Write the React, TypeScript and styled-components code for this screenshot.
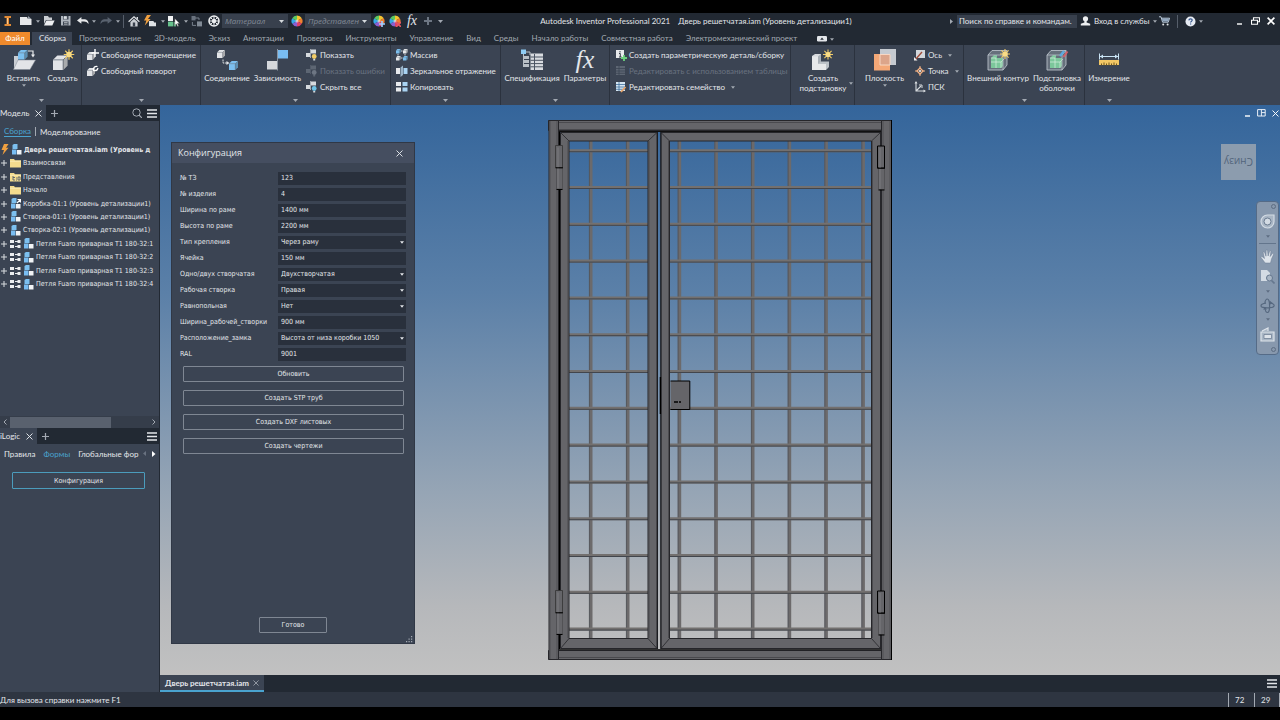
import React from "react";
import styled, { createGlobalStyle, css } from "styled-components";

const ui = `Lato, "Open Sans", sans-serif`;
const form = `"DejaVu Sans Condensed", "DejaVu Sans", sans-serif`;
const c = {
  dark: "#222933",
  panel: "#3b4453",
  line: "#2b323e",
  text: "#e3e6ea",
  dim: "#a3a9b2",
  off: "#697280",
  accent: "#4aa3cf",
  field: "#29303c",
  light: "#d6dade",
  blue: "#7cc0f0",
  gold: "#f2cc66",
};

const Global = createGlobalStyle`
  * { box-sizing: border-box; }
  body { margin: 0; background: #000; }
  button, input, select { font: inherit; color: inherit; margin: 0; padding: 0; border: 0; background: none; border-radius: 0; }
  button { cursor: pointer; white-space: nowrap; }
  svg { display: block; flex: none; }
`;

/* ---------- icons ---------- */
type SvgProps = { w: number; h: number; children: React.ReactNode };
const Svg = ({ w, h, children }: SvgProps) => (
  <svg width={w} height={h} viewBox={`0 0 ${w} ${h}`} fill="none" aria-hidden="true">{children}</svg>
);
const Caret = ({ color = c.dim, w = 5 }: { color?: string; w?: number }) => (
  <svg width={w} height="3" viewBox="0 0 5 3" aria-hidden="true"><path d="M0 0h5L2.5 3z" fill={color} /></svg>
);
const Cube = ({ x, y, s, f = c.light }: { x: number; y: number; s: number; f?: string }) => (
  <g transform={`translate(${x} ${y}) scale(${s})`}>
    <path d="M0 3L3 0H10V7L7 10H0z" fill={f} />
    <path d="M0 3H7V10M7 3L10 0" stroke="#6d7681" strokeWidth=".6" />
    <path d="M7 3L10 0V7L7 10z" fill="#000" opacity=".25" />
  </g>
);
const Star = ({ x, y, s = 1 }: { x: number; y: number; s?: number }) => (
  <g transform={`translate(${x} ${y}) scale(${s})`}>
    <path d="M0-5V5M-5 0H5M-3.6-3.6L3.6 3.6M-3.6 3.6L3.6-3.6" stroke={c.gold} strokeWidth="1.1" />
    <circle r="2.6" fill="#f9dc85" />
  </g>
);
const Wheel = ({ mark }: { mark?: "plus" | "x" }) => (
  <Svg w={12} h={12}>
    <path d="M6 6V.5A5.500 5.500 0 0 1 10.800 3.200z" fill="#f4c430" />
    <path d="M6 6L10.800 3.200A5.500 5.500 0 0 1 10.800 8.800z" fill="#f08030" />
    <path d="M6 6L10.800 8.800A5.500 5.500 0 0 1 6 11.500z" fill="#dd3f6a" />
    <path d="M6 6V11.500A5.500 5.500 0 0 1 1.200 8.800z" fill="#8a5fd0" />
    <path d="M6 6L1.200 8.800A5.500 5.500 0 0 1 1.200 3.200z" fill="#35a8e8" />
    <path d="M6 6L1.200 3.200A5.500 5.500 0 0 1 6 .5z" fill="#5cc860" />
    <circle cx="6" cy="6" r="1.6" fill="#fff" opacity=".6" />
    {mark === "plus" && <path d="M9 6v6M6 9h6" stroke="#9fd0ff" strokeWidth="1.6" />}
    {mark === "x" && <path d="M7 7l5 5M12 7l-5 5" stroke="#e85560" strokeWidth="1.6" />}
  </Svg>
);
const IconI = () => (
  <Svg w={8} h={12}><path d="M.5 1h6.500v2H5v6h2v2H.5V9H2.500V3H.5z" fill="#e08a35" /><path d="M3 3h1v6H3z" fill="#ffc98a" /></Svg>
);
const IconNew = () => <Svg w={12} h={10}><path d="M0 1h7l1 2h3.500v6H0z" fill="#e6e8ea" /><path d="M8 0l3.500 3H8z" fill="#9aa3ad" /></Svg>;
const IconOpen = () => <Svg w={12} h={10}><path d="M1 0h4l1 1.500h3V4H3L1 8z" fill="#c9cdd2" /><path d="M3.400 4.600H11.600L9.300 9.400H1z" fill="#eceef0" /></Svg>;
const IconSave = () => <Svg w={10} h={10}><path d="M0 0h9.500v9.500H0z" fill="#aeb5bd" /><path d="M2 0h5.500v3.600H2zM2 5.600h5.500v3.900H2z" fill="#3a4350" /><path d="M3 .6h2.600v2.200H3zM3 6.600h3.600M3 8.200h3.600" stroke="#d8dce0" strokeWidth=".7" fill="#d8dce0" /></Svg>;
const IconUndo = ({ off }: { off?: boolean }) => (
  <svg width="12" height="8" viewBox="0 0 12 8" aria-hidden="true">
    <path d={off ? "M12 3.400L7.600 0V2.200H4Q.6 2.600.4 7 2.400 4.600 5 4.600H7.600V6.800z" : "M0 3.400L4.400 0V2.200H8Q11.400 2.600 11.600 7 9.600 4.600 7 4.600H4.400V6.800z"} fill={off ? "#59626f" : "#e6e8ea"} />
  </svg>
);
const IconHome = () => <Svg w={12} h={11}><path d="M.6 5.800L6 .8l5.400 5" stroke="#dfe2e5" strokeWidth="1.2" /><path d="M2.400 6L6 2.800 9.600 6v4.600H2.400z" fill="#c9cdd2" /><path d="M4.800 6.500h2.400v4H4.800z" fill="#39414d" /><path d="M8.600 1h1.400v2.400L8.600 2.200z" fill="#dfe2e5" /></Svg>;
const IconBoltDoc = () => <Svg w={13} h={12}><path d="M3 0L0 5.600h2.400L.8 10.600 6.600 4H4L7 0z" fill="#f0a040" /><path d="M5 6h4.400l.8 1.400H12v3.800H5z" fill="#dfe2e5" /></Svg>;
const IconPick = () => <Svg w={12} h={11}><path d="M0 0h5v5H0z" fill="#f2f3f4" /><path d="M0 5.600h5v4.800H0z" fill="#67c18c" /><path d="M5.600 6H8v4.400H5.600z" fill="#67c18c" /><path d="M6.800 2.400v7l1.600-1.500 1.200 2.600 1.100-.5-1.200-2.600h2.200z" fill="#fff" stroke="#333" strokeWidth=".4" /></Svg>;
const IconPlace = () => <Svg w={12} h={11}><path d="M.5 0h4v4.400h-4z" fill="#69727e" /><path d="M6 5.400h5v5H6z" fill="#818a95" /><path d="M1.400 6v3.400H5M4 2h4v2" stroke="#818a95" strokeWidth=".9" /></Svg>;
const IconTarget = () => <Svg w={12} h={12}><circle cx="6" cy="6" r="5" stroke="#eceef0" strokeWidth="1.6" /><circle cx="6" cy="6" r="2.2" fill="#eceef0" /><path d="M6 1v3M6 8v3M1 6h3M8 6h3M2.600 2.600l1.800 1.800M7.600 7.600l1.800 1.800M9.400 2.600L7.600 4.400M4.400 7.600L2.600 9.400" stroke="#eceef0" /></Svg>;
const IconPlus = ({ color = "#6d7683", s = 8 }: { color?: string; s?: number }) => (
  <svg width={s} height={s} viewBox="0 0 8 8" aria-hidden="true"><path d="M4 0v8M0 4h8" stroke={color} strokeWidth={s > 7 ? 2 : 1.4} /></svg>
);
const IconX = ({ s = 7, color = c.text, t = 1.1 }: { s?: number; color?: string; t?: number }) => (
  <svg width={s} height={s} viewBox="0 0 8 8" aria-hidden="true"><path d="M.6.6l6.800 6.800M7.400.6L.6 7.400" stroke={color} strokeWidth={t} /></svg>
);
const IconMenu = () => <Svg w={10} h={9}><path d="M0 1h10M0 4.500h10M0 8h10" stroke="#e3e6ea" strokeWidth="1.4" /></Svg>;
const IconUser = () => <Svg w={11} h={10}><circle cx="5.5" cy="2.8" r="2.6" fill="#eceef0" /><path d="M4.400 4.500h2.200v2l3.600 1.200V9.600H.8V7.700l3.600-1.200z" fill="#eceef0" /></Svg>;
const IconCart = () => <Svg w={11} h={10}><path d="M0 .8h2l1.600 5.400h5.600l1.400-4H2.600" stroke="#b9c8d8" /><path d="M2.800 2.400h7.400l-1 3H3.600z" fill="#93a8bf" /><circle cx="4.2" cy="8.4" r="1" fill="#dfe2e5" /><circle cx="8.6" cy="8.4" r="1" fill="#dfe2e5" /></Svg>;
const IconHelp = () => <Svg w={11} h={11}><circle cx="5.5" cy="5.5" r="5" fill="#e6ebf3" /><path d="M3.800 4.300q.2-1.500 1.800-1.500 1.600 0 1.600 1.300 0 .8-.9 1.300-.7.4-.7 1M5.600 7.400v1.200" stroke="#33538a" strokeWidth="1.2" /></Svg>;
const IconRestore = () => <Svg w={9} h={8}><path d="M2.500 3V.7h6v4H6.600M.5 3.200h6v4h-6z" stroke="#fff" strokeWidth="1.1" /></Svg>;
const IconMin = () => <Svg w={7} h={8}><path d="M1 7h5" stroke="#fff" strokeWidth="1.4" /></Svg>;
const IconTile = () => <Svg w={9} h={8}><path d="M.6.6h7.600v6.400H.6zM4.400.6V7M4.400 3.600h3.800" stroke="#e8eef5" /></Svg>;
const IconCam = () => <Svg w={10} h={6}><rect width="10" height="5.5" rx="1.2" fill="#e3e6ea" /><path d="M3.200 3.800L5 1.600l1.800 2.200z" fill="#222933" /></Svg>;

const BigInsert = () => (
  <Svg w={24} h={22}>
    <path d="M2 7h4V17L2 20z" fill="#c9cdd2" /><path d="M6 11H23.500L18 20.500H1.500z" fill="#e2e4e7" /><path d="M6 11H23.500L18 20.500H1.500z" stroke="#828a94" strokeWidth=".5" />
    <Cube x={6} y={1} s={0.95} f={c.blue} />
    <path d="M16 2h5v4" stroke="#e8eaec" strokeWidth="1.2" /><path d="M19 5.500h4l-2 3z" fill="#e8eaec" />
  </Svg>
);
const BigCreate = () => <Svg w={24} h={22}><Cube x={2} y={6.5} s={1.45} f="#e2e4e7" /><Star x={18} y={5.5} s={1.05} /></Svg>;
const BigJoint = () => (
  <Svg w={24} h={22}><Cube x={2} y={1} s={0.8} f="#e2e4e7" /><Cube x={14} y={12} s={0.9} f={c.blue} /><path d="M8 10.500v3.500h4" stroke="#dfe2e5" strokeDasharray="2 .8" /><path d="M11.500 12l3 2-3 2z" fill="#dfe2e5" /></Svg>
);
const BigConstraint = () => (
  <Svg w={24} h={22}><path d="M12 1h10v8.500H12z" fill="#79bdf2" /><path d="M1 12h10v8.500H1z" fill="#d5d8dc" /><path d="M11.500 0v21.500" stroke="#8b95a1" /></Svg>
);
const BigBom = () => (
  <Svg w={24} h={22}><path d="M1 .5h5v4.500H1z" fill="#8fccf5" /><path d="M4 7h5v3H4zM4 11h5v3H4zM4 15h5v3H4z" fill="#b9bfc6" /><path d="M3.500 5v13M6 3h4v3" stroke="#b9bfc6" />
    <path d="M10.500 4.500H23V21H10.500z" fill="#d9dce0" /><path d="M10.500 8H23M10.500 11.300H23M10.500 14.600H23M10.500 17.800H23M14.500 5V21" stroke="#4b5462" /></Svg>
);
const BigSub = () => <Svg w={24} h={22}><path d="M1 7l3-2h6v9l-1 1H1z" fill="#d7dade" /><path d="M1 7.500h6v7.500h8v6H1z" fill="#e6e8ea" /><path d="M7 15l2.500-2.500H18V18l-3 3v-6z" fill="#bcc2c8" /><path d="M7 7.500l3-2.500v7.500L7 15z" fill="#a9b0b7" /><Star x={17} y={5.5} s={1} /></Svg>;
const BigPlane = () => <Svg w={24} h={22}><path d="M7 0H23V16H7z" fill="#c5cad0" /><path d="M1 5H17V21.500H1z" fill="#f4a877" /><path d="M7 5.500H17V16H7z" fill="#dca58a" stroke="#f7d7c3" /></Svg>;
const GreenBox = () => (
  <>
    <path d="M2 6l4-4.500H21V16l-4 5H2z" fill="#66707c" stroke="#b8c0c8" strokeWidth=".9" /><path d="M5 9l3-3h3v3h6v8l-2 2H5z" fill="#7cc79b" /><path d="M5 13h10v6M10 9v10M5 9h5v0M15 13l3-3" stroke="#d8f0e0" strokeWidth=".7" /><path d="M2 6H17V21M17 6l4-4.500" stroke="#b8c0c8" strokeWidth=".8" />
  </>
);
const BigShrink = () => <Svg w={24} h={22}><GreenBox /><Star x={19} y={5} s={1} /></Svg>;
const BigShell = () => <Svg w={24} h={22}><GreenBox /><path d="M15 7l4-5" stroke="#5aa9e0" strokeWidth="2.200" /><path d="M18.500 8l4-5.500" stroke="#d3606a" strokeWidth="2" /></Svg>;
const BigMeasure = () => <Svg w={24} h={22}><path d="M2.500 4.500v6M21.500 4.500v6M3 7.500h18" stroke="#c9e4f5" /><path d="M3 7.500l3-2v4zM21 7.500l-3-2v4z" fill="#c9e4f5" /><path d="M2 11H22v5H2z" fill="#f2c765" /><path d="M4.500 14.500v2M7 13.500v3M9.500 14.500v2M12 13.500v3M14.500 14.500v2M17 13.500v3M19.500 14.500v2" stroke="#6b5522" /></Svg>;

const SmMove = () => <Svg w={12} h={12}><Cube x={0} y={3} s={0.8} f="#e2e4e7" /><path d="M8 0v8M4.500 4h7.500" stroke="#fff" strokeWidth="1.400" /></Svg>;
const SmRotate = () => <Svg w={12} h={12}><Cube x={0} y={3} s={0.8} f="#e2e4e7" /><path d="M10.500 1.500Q6 1 6.500 5.500 10 6.500 11 3" stroke="#fff" strokeWidth="1.200" /></Svg>;
const SmRel = ({ tone, bulb }: { tone: string; bulb: string }) => <Svg w={12} h={12}><path d="M5 .5h5v4H5zM0 4h4v4H0z" fill={tone} /><path d="M4.500 0v9" stroke={tone} strokeWidth=".7" /><circle cx="8.200" cy="7.500" r="2.400" fill={bulb} /><path d="M7.200 10h2v1.500h-2z" fill={tone} /></Svg>;
const SmPattern = () => <Svg w={12} h={12}><Cube x={0} y={0} s={0.46} f={c.blue} /><Cube x={7} y={0} s={0.46} f="#e8eaec" /><Cube x={0} y={7} s={0.46} f="#e8eaec" /><Cube x={7} y={7} s={0.46} f={c.blue} /><path d="M5 2h1.500M2 5v1.500M9 5v1.500M5 9h1.500" stroke="#cfd4d9" /></Svg>;
const SmMirror = () => <Svg w={12} h={12}><path d="M0 3h4v6H0z" fill="#e8eaec" /><path d="M7.500 3h4v6h-4z" fill="#a9d3f2" /><path d="M4.500 2.500l2.500-2v9.500L4.500 12z" fill="#9bb4c8" /></Svg>;
const SmCopy = () => <Svg w={12} h={12}><path d="M0 1h5v4H0zM0 6.500h5v4H0z" fill="#e8eaec" /><path d="M6.500 1h5v4h-5zM6.500 6.500h5v4h-5z" fill="#a9d3f2" /></Svg>;
const SmIpart = () => <Svg w={12} h={12}><path d="M1 1h8v8H1z" fill="#e8eaec" /><path d="M5 2v1.500M4 4.500h1.300V8M4 8h2.600" stroke="#333b47" /><path d="M9 6v6M6 9h6" stroke="#6bd07c" strokeWidth="1.800" /></Svg>;
const SmTable = ({ off }: { off?: boolean }) => <Svg w={12} h={12}><path d="M1 1h9v9H1z" fill={off ? "#5d6673" : "#d6e6f2"} /><path d="M1 3.500h9M1 6h9M1 8.300h9M4 1v9" stroke={off ? c.panel : "#3f6f9c"} strokeWidth=".8" />{!off && <path d="M6 11l4.500-5" stroke="#e8a468" strokeWidth="1.800" />}</Svg>;
const SmAxis = () => <Svg w={12} h={12}><path d="M2 1h9v8H2z" fill="#d3d7db" /><path d="M1 11L8 3" stroke="#a04c38" strokeWidth="1.400" /><path d="M0 8l3.500 3.500H0z" fill="#eceef0" /></Svg>;
const SmPoint = () => <Svg w={12} h={12}><path d="M6 1v10M1 6h10" stroke="#f4b183" /><path d="M6 3l3 3-3 3-3-3z" stroke="#f4b183" strokeWidth="1.300" fill={c.panel} /><circle cx="6" cy="6" r="1" fill="#fff" /></Svg>;
const SmUcs = () => <Svg w={12} h={12}><path d="M2 1v9h9M2 10l5-5" stroke="#d6dade" strokeWidth="1.100" /><path d="M.5 2.500L2 0l1.500 2.500zM9.500 8.500L12 10l-2.500 1.500z" fill="#d6dade" /><path d="M5 4h3v3" stroke="#d6dade" /></Svg>;

const TreeAsm = ({ pin }: { pin?: boolean }) => <Svg w={11} h={11}><path d="M1.500 1L3 0h3.500v5H1.500z" fill={c.blue} /><path d="M1 5.500h4.500v5H1z" fill="#79bdf2" /><path d="M6 6h4.500v4.500H6z" fill="#f0f2f4" />{pin && <path d="M7 5L10 2M7.500 1.500h3v3" stroke="#fff" strokeWidth="1.200" />}</Svg>;
const TreeFolder = ({ rep }: { rep?: boolean }) => <Svg w={11} h={10}><path d="M0 1h4l1 1.300h6V9.500H0z" fill="#f4dc8e" /><path d="M0 3.300h11" stroke="#fdf1c0" strokeWidth=".7" />{rep && <path d="M3 4v4h2M3 5.500h2M6 6h1M6 8h1M8 5h2v3H8z" stroke="#56606e" strokeWidth=".9" />}</Svg>;
const TreeLink = () => <Svg w={11} h={8}><path d="M0 0h4v3H0zM0 5h4v3H0z" fill="#eceef0" /><path d="M5 1.500h3M5 6.500h3" stroke="#eceef0" /><path d="M7.500 0h3v3h-3zM7.500 5h3v3h-3z" fill="#eceef0" /></Svg>;
const Bolt = () => <Svg w={8} h={11}><path d="M3 0h4.500L5 3.800h2.500L1.500 11 3 6H.5z" fill="#f0a040" /></Svg>;

/* ---------- frame ---------- */
const Screen = styled.div`
  min-height: 100vh;
  display: flex;
  flex-direction: column;
  padding: 13px 0;
  background: #000;
  color: ${c.text};
  font: 8px/10px ${ui};
`;
const TitleBar = styled.header`
  display: flex;
  align-items: center;
  height: 19px;
  padding-bottom: 3px;
  background: ${c.dark};
`;
const Group = styled.div`display: flex; align-items: center; height: 14px; flex: none;`;
const Slot = styled.button<{ $w: number }>`
  width: ${(p) => p.$w}px;
  height: 14px;
  flex: none;
  display: flex;
  align-items: center;
  justify-content: center;
  gap: 3px;
`;
const Rule = styled.span<{ $m?: number }>`
  width: 1px;
  height: 13px;
  margin: 0 ${(p) => p.$m ?? 3}px;
  background: #565e6a;
`;
const Fx = styled.span<{ $s: number }>`
  font: italic ${(p) => p.$s}px/${(p) => p.$s}px "Liberation Serif", serif;
  color: #e3e6ea;
`;
const PickWrap = styled.label`
  display: flex;
  align-items: center;
  width: 66px;
  height: 14px;
  padding: 0 4px 0 3px;
  background: #38404d;
  color: #838b97;
  font: italic 8px/10px "Open Sans", sans-serif;
  select { appearance: none; flex: 1; min-width: 0; outline: 0; }
`;
const WindowTitle = styled.h1`
  flex: 1;
  display: flex;
  justify-content: center;
  gap: 8px;
  margin: 0;
  font: inherit;
  white-space: nowrap;
`;
const Search = styled.input`
  width: 120px;
  height: 13px;
  background: #38404d;
  padding: 0 2px;
  &::placeholder { color: ${c.text}; opacity: 1; }
`;
const Account = styled.button`
  display: flex;
  align-items: center;
  gap: 3px;
  width: 78px;
  padding-left: 3px;
`;
const WindowButtons = styled.div`display: flex; margin-left: 27px; padding-right: 1px;`;

const Tabs = styled.nav`
  display: flex;
  height: 13px;
  background: ${c.dark};
`;
const Tab = styled.button<{ $kind?: "file" | "on" }>`
  padding: 0 6px 1px 7px;
  color: ${c.dim};
  ${(p) => p.$kind === "file" && css`width: 30px; padding: 0 0 1px; margin-right: 2px; background: #ef8a2c; color: #fff;`}
  ${(p) => p.$kind === "on" && css`background: ${c.panel}; color: ${c.text};`}
`;

const Ribbon = styled.section`
  display: flex;
  height: 60px;
  background: ${c.panel};
`;
const Panel = styled.div<{ $w: number; $pad?: number; $last?: boolean }>`
  display: grid;
  grid-template-rows: 50px 10px;
  width: ${(p) => p.$w}px;
  flex: none;
  border-right: ${(p) => (p.$last ? 0 : 1)}px solid ${c.line};
  > div { padding-left: ${(p) => p.$pad ?? 5}px; }
`;
const Tools = styled.div`display: flex;`;
const Foot = styled.button`display: flex; align-items: center; justify-content: center;`;
const Big = styled.button<{ $w: number }>`
  position: relative;
  width: ${(p) => p.$w}px;
  flex: none;
  display: flex;
  flex-direction: column;
  align-items: center;
  justify-content: flex-start;
  padding-top: 4px;
  line-height: 10px;
  > span:first-of-type { margin-top: 2px; }
  > svg:last-child:not(:first-child) { margin-top: 1px; }
`;
const FxBox = styled.i`display: flex; align-items: center; height: 22px;`;
const Stack = styled.div<{ $inset?: number }>`
  display: flex;
  flex-direction: column;
  padding-top: 2px;
  margin-left: ${(p) => p.$inset ?? 0}px;
`;
const Small = styled.button<{ $off?: boolean }>`
  display: flex;
  align-items: center;
  gap: 2px;
  height: 16px;
  color: ${(p) => (p.$off ? c.off : c.text)};
  > svg + span + svg { margin-left: 4px; }
`;
const CornerCaret = styled.i`position: absolute; right: 0; top: 37px;`;

/* ---------- body ---------- */
const Body = styled.div`flex: 1; display: flex; min-height: 0;`;
const Side = styled.aside`
  width: 160px;
  flex: none;
  display: flex;
  flex-direction: column;
  background: ${c.panel};
  border-right: 1px solid ${c.dark};
`;
const Dock = styled.section<{ $grow: number }>`
  flex: ${(p) => p.$grow} 1 0;
  display: flex;
  flex-direction: column;
  min-height: 0;
  overflow: hidden;
`;
const DockTabs = styled.div`
  display: flex;
  align-items: center;
  gap: 5px;
  height: 16px;
  flex: none;
  padding-right: 2px;
  background: ${c.dark};
`;
const DockTab = styled.div`
  display: flex;
  align-items: center;
  gap: 6px;
  height: 16px;
  padding-right: 4px;
  background: ${c.panel};
  white-space: nowrap;
  button { display: flex; }
`;
const Spacer = styled.span`flex: 1;`;
const SubTabs = styled.div<{ $h: number }>`
  display: flex;
  align-items: center;
  gap: 4px;
  height: ${(p) => p.$h}px;
  flex: none;
  padding: 0 4px 1px;
  white-space: nowrap;
`;
const SubTab = styled.button<{ $on?: boolean; $line?: boolean }>`
  color: ${(p) => (p.$on ? c.accent : c.text)};
  ${(p) => p.$line && css`border-bottom: 1px solid ${c.accent};`}
`;
const Bar = styled.span`width: 1px; height: 9px; background: ${c.dim};`;
const Tree = styled.ul`
  list-style: none;
  margin: 0;
  padding: 0;
  min-height: 148px;
  display: grid;
  grid-auto-rows: 1fr;
  font: 7px/10px ${form};
`;
const Node = styled.li<{ $root?: boolean }>`
  display: flex;
  align-items: center;
  gap: 2px;
  padding-left: 1px;
  white-space: nowrap;
  font-weight: ${(p) => (p.$root ? 700 : 400)};
`;
const Expand = styled.button`display: flex; margin-right: 1px;`;
const HScroll = styled.div`
  display: grid;
  grid-template-columns: 10px 101px 1fr 10px;
  align-items: center;
  justify-items: center;
  height: 12px;
  margin-top: auto;
  flex: none;
  background: #353d4a;
  color: ${c.dim};
`;
const Thumb = styled.span`justify-self: stretch; height: 11px; background: #59616e;`;
const FormButton = styled.button`
  display: block;
  height: 17px;
  margin: 8px 14px 0 12px;
  border: 1px solid #4b9cbc;
  border-radius: 1px;
  font: 7px/10px ${form};
`;

const Work = styled.main`flex: 1; display: flex; flex-direction: column; min-width: 0;`;
const Canvas = styled.div`
  position: relative;
  flex: 1;
  display: flex;
  align-items: center;
  justify-content: center;
  background: linear-gradient(#34659b 0%, #5b80a8 33%, #96a5b5 68%, #b6b8bb 88%, #c1c1c1 100%);
`;
const DocTabs = styled.div`
  display: flex;
  align-items: stretch;
  justify-content: space-between;
  height: 17px;
  padding-right: 3px;
  background: ${c.dark};
`;
const DocTab = styled.div`
  display: flex;
  align-items: center;
  gap: 4px;
  padding: 0 5px;
  background: ${c.panel};
  border-bottom: 2px solid ${c.accent};
  font-weight: 700;
  button { display: flex; }
`;
const IconButton = styled.button`display: flex; align-items: center; justify-content: center;`;
const Status = styled.footer`
  display: flex;
  align-items: center;
  height: 15px;
  background: #2e3541;
  > span { flex: 1; }
  > output { width: 26px; height: 14px; padding: 2px 0 0 6px; border-left: 1px solid ${c.dim}; }
  > output:last-child { border-right: 1px solid ${c.dim}; }
`;

const DocControls = styled.div`position: absolute; top: 4px; right: 1px; display: flex; gap: 6px;`;
const ViewCube = styled.button`
  position: absolute;
  top: 39px;
  right: 24px;
  width: 35px;
  height: 36px;
  background: #8c9cae;
  color: #53657c;
  font: 10px/12px "Open Sans", sans-serif;
  transform: rotate(180deg);
`;
const NavBar = styled.div`
  position: absolute;
  top: 96px;
  right: 1px;
  width: 23px;
  height: 154px;
  display: flex;
  flex-direction: column;
  align-items: center;
  justify-content: space-between;
  padding: 2px 0;
  background: #8798ad;
  border: 1px solid #556b87;
  border-radius: 4px;
`;
const End = styled.span`
  align-self: flex-end;
  width: 5px;
  height: 5px;
  margin-right: 2px;
  border: 1px solid #5d6d82;
  border-radius: 3px;
`;
const NavRule = styled.span`width: 17px; height: 1px; background: #63758c;`;

/* ---------- dialog ---------- */
const Dialog = styled.form`
  position: absolute;
  left: 11px;
  top: 37px;
  width: 244px;
  height: 502px;
  display: flex;
  flex-direction: column;
  background: ${c.panel};
  border: 1px solid #303846;
  font: 7px/10px ${form};
`;
const DialogHead = styled.header`
  display: flex;
  align-items: center;
  justify-content: space-between;
  height: 20px;
  flex: none;
  padding: 0 11px 0 6px;
  background: #454e60;
  h2 { margin: 0; font: 9px/12px "Open Sans", sans-serif; }
  button { display: flex; }
`;
const Rows = styled.div`display: grid; grid-auto-rows: 16px; padding: 7px 8px 0;`;
const Row = styled.label`
  display: grid;
  grid-template-columns: 98px 1fr;
  align-items: center;
  white-space: nowrap;
  input, select { height: 13px; width: 100%; padding: 0 3px; background: ${c.field}; outline: 0; }
  select { appearance: none; }
`;
const SelectBox = styled.span`
  display: grid;
  align-items: center;
  > * { grid-area: 1 / 1; }
  > svg { justify-self: end; margin-right: 2px; pointer-events: none; }
`;
const Actions = styled.div`display: grid; gap: 8px; padding: 4px 10px 0 11px;`;
const Action = styled.button<{ $w?: number }>`
  width: ${(p) => (p.$w ? `${p.$w}px` : "auto")};
  height: 16px;
  border: 1px solid #7f8793;
  border-radius: 1px;
`;
const DialogFoot = styled.div`display: flex; justify-content: center; margin: auto 0 10px;`;
const Grip = styled.span`position: absolute; right: 1px; bottom: 0;`;

/* ---------- data ---------- */
const tabNames = ["Проектирование", "3D-модель", "Эскиз", "Аннотации", "Проверка", "Инструменты", "Управление", "Вид", "Среды", "Начало работы", "Совместная работа", "Электромеханический проект"];
const fields: { label: string; value: string; select?: boolean }[] = [
  { label: "№ ТЗ", value: "123" },
  { label: "№ изделия", value: "4" },
  { label: "Ширина по раме", value: "1400 мм" },
  { label: "Высота по раме", value: "2200 мм" },
  { label: "Тип крепления", value: "Через раму", select: true },
  { label: "Ячейка", value: "150 мм" },
  { label: "Одно/двух створчатая", value: "Двухстворчатая", select: true },
  { label: "Рабочая створка", value: "Правая", select: true },
  { label: "Равнопольная", value: "Нет", select: true },
  { label: "Ширина_рабочей_створки", value: "900 мм" },
  { label: "Расположение_замка", value: "Высота от низа коробки 1050", select: true },
  { label: "RAL", value: "9001" },
];
const actions = ["Обновить", "Создать STP труб", "Создать DXF листовых", "Создать чертежи"];
const nodes: { text: string; icon: React.ReactNode }[] = [
  { text: "Взаимосвязи", icon: <TreeFolder /> },
  { text: "Представления", icon: <TreeFolder rep /> },
  { text: "Начало", icon: <TreeFolder /> },
  { text: "Коробка-01:1 (Уровень детализации1)", icon: <TreeAsm pin /> },
  { text: "Створка-01:1 (Уровень детализации1)", icon: <TreeAsm /> },
  { text: "Створка-02:1 (Уровень детализации1)", icon: <TreeAsm /> },
  ...[1, 2, 3, 4].map((n) => ({ text: `Петля Fuaro приварная T1 180-32:${n}`, icon: <><TreeLink /><TreeAsm /></> })),
];

/* ---------- the door ---------- */
const barsY = Array.from({ length: 14 }, (_, i) => 30.7 + i * 36.8);
const steel = "#656569";
const edge = "#26262a";
const VBar = ({ x }: { x: number }) => (
  <><path d={`M${x} 20V519`} stroke="#6c6a6b" strokeWidth="3.400" /><path d={`M${x - 1.4} 20V519`} stroke="#4f5258" strokeWidth=".8" /></>
);
const HBars = ({ a, b }: { a: number; b: number }) => (
  <>{barsY.map((y) => <g key={y}><path d={`M${a} ${y}H${b}`} stroke="#73706f" strokeWidth="3" /><path d={`M${a} ${y + 1}H${b}`} stroke="#42454c" /></g>)}</>
);
const Leaf = ({ x, w }: { x: number; w: number }) => (
  <>
    <path fillRule="evenodd" d={`M${x} 12.500h${w}v516h${-w}zM${x + 8.5} 21v497.500h${w - 17.5}V21z`} fill={steel} stroke={edge} />
    <path d={`M${x} 12.500l8.500 8.500M${x + w} 12.500l-9 8.500M${x} 528.500l8.500-10M${x + w} 528.500l-9-10`} stroke={edge} strokeWidth=".8" />
    <path d={`M${x + 7.5} 21v497M${x + w - 8} 21v497`} stroke="#4b4b4f" />
  </>
);
const Hinge = ({ x, y, flip }: { x: number; y: number; flip?: boolean }) => (
  <g>
    <path d={`M${x} ${y}h7v22h-7z`} fill={steel} stroke={flip ? "#000" : "#333"} strokeWidth={flip ? 1 : 0.8} />
    <path d={`M${x + 1} ${y + 22.5}h6v21h-6z`} fill={steel} stroke="#4a4a4e" strokeWidth=".7" />
    <path d={`M${x + 2.5} ${y + 2}v41`} stroke="#7c7c80" />
    <path d={`M${x} ${y + 22.3}h7.500M${x + 1} ${y + 44}h6`} stroke="#000" />
  </g>
);
const Door = () => (
  <svg width="344" height="540" viewBox="0 0 344 540" fill="none" role="img" aria-label="Дверь решетчатая">
    <VBar x={42.8} /><VBar x={79.8} />
    {[131.5, 168.2, 204.8, 241.5, 278.2, 315.2].map((x) => <VBar key={x} x={x} />)}
    <HBars a={21} b={101} /><HBars a={122} b={324} />
    <path d="M11 12V529M333 12V529" stroke="#000" strokeWidth="2" />
    <Leaf x={12.5} w={96.5} />
    <Leaf x={113} w={219.5} />
    <path d="M109.500 12v517M112.800 12v517" stroke="#1b1c20" />
    <path d="M112.400 257v37" stroke="#000" strokeWidth="1.400" />
    <path d="M.5.5H343.500V10.500H.5zM.5 530.500H343.500V539.500H.5z" fill={steel} stroke={edge} />
    <path d="M11 9.500H333M11 2.500H333M11 537.500H333" stroke="#4a4a4e" />
    <path d="M11 11.500H333M11 529.700H333" stroke="#111" />
    <path d="M1 .5h9.500v539H1zM333.500.5h10v539h-10z" fill={steel} stroke={edge} />
    <path d="M2 1v538M342 1v538M335 1v538M9 1v538" stroke="#505054" />
    <path d="M343.500 0V540" stroke="#000" />
    <Hinge x={7.5} y={25.5} /><Hinge x={7.5} y={470.5} />
    <Hinge x={329.5} y={26} flip /><Hinge x={329.5} y={471} flip />
    <path d="M122.500 261h19.300v28.500h-19.300" fill={steel} stroke="#000" />
    <path d="M126 282h4M131 282h2" stroke="#000" strokeWidth="1.600" />
  </svg>
);

const navIcon = { stroke: "#d3dbe4", strokeWidth: 1.2 };

export default function App() {
  return (
    <Screen>
      <Global />
      <TitleBar>
        <Group>
          <Slot $w={16} aria-label="Inventor"><IconI /></Slot>
          <Slot $w={19} aria-label="Создать файл"><IconNew /></Slot>
          <Slot $w={5} aria-label="Варианты"><Caret w={4} /></Slot>
          <Slot $w={17} aria-label="Открыть"><IconOpen /></Slot>
          <Slot $w={17} aria-label="Сохранить"><IconSave /></Slot>
          <Slot $w={17} aria-label="Отменить"><IconUndo /></Slot>
          <Slot $w={5} aria-label="История"><Caret w={4} /></Slot>
          <Slot $w={19} aria-label="Повторить"><IconUndo off /></Slot>
          <Slot $w={5} aria-label="История повтора"><Caret w={4} /></Slot>
          <Rule />
          <Slot $w={14} aria-label="Главная"><IconHome /></Slot>
          <Slot $w={19} aria-label="Обновить"><IconBoltDoc /></Slot>
          <Slot $w={5} aria-label="Варианты обновления"><Caret w={4} /></Slot>
          <Slot $w={18} aria-label="Выбор"><IconPick /></Slot>
          <Slot $w={5} aria-label="Варианты выбора"><Caret w={4} /></Slot>
          <Slot $w={17} aria-label="Разместить"><IconPlace /></Slot>
          <Slot $w={17} aria-label="Параметры вида"><IconTarget /></Slot>
          <PickWrap><select aria-label="Материал"><option>Материал</option></select><Caret color={c.light} /></PickWrap>
          <Slot $w={17} aria-label="Цвет"><Wheel /></Slot>
          <PickWrap><select aria-label="Представление"><option>Представлен</option></select><Caret color={c.light} /></PickWrap>
          <Slot $w={16} aria-label="Добавить цвет"><Wheel mark="plus" /></Slot>
          <Slot $w={16} aria-label="Убрать цвет"><Wheel mark="x" /></Slot>
          <Slot $w={18} aria-label="Параметры"><Fx $s={14}>fx</Fx></Slot>
          <Slot $w={13} aria-label="Добавить"><IconPlus /></Slot>
          <Slot $w={13} aria-label="Настроить"><Caret /></Slot>
        </Group>
        <WindowTitle><span>Autodesk Inventor Professional 2021</span><span>Дверь решетчатая.iam (Уровень детализации1)</span></WindowTitle>
        <Group>
          <Slot $w={12} aria-label="Развернуть поиск"><Svg w={3} h={5}><path d="M0 0l3 2.500L0 5z" fill={c.dim} /></Svg></Slot>
          <Search aria-label="Поиск" placeholder="Поиск по справке и командам." />
          <Account><IconUser /><span>Вход в службы</span><Caret w={4} /></Account>
          <Slot $w={18} aria-label="Магазин"><IconCart /></Slot>
          <Rule $m={4} />
          <Slot $w={16} aria-label="Справка"><IconHelp /></Slot>
          <Slot $w={6} aria-label="Варианты справки"><Caret w={4} /></Slot>
          <WindowButtons>
            <Slot $w={16} aria-label="Свернуть"><IconMin /></Slot>
            <Slot $w={16} aria-label="Восстановить"><IconRestore /></Slot>
            <Slot $w={16} aria-label="Закрыть"><IconX s={8} color="#fff" t={1.6} /></Slot>
          </WindowButtons>
        </Group>
      </TitleBar>
      <Tabs>
        <Tab $kind="file">Файл</Tab>
        <Tab $kind="on">Сборка</Tab>
        {tabNames.map((t) => <Tab key={t}>{t}</Tab>)}
        <Slot $w={44} aria-label="Вид ленты"><IconCam /><Caret w={4} /></Slot>
      </Tabs>
      <Ribbon>
        <Panel $w={82} $pad={4}>
          <Tools>
            <Big $w={39}><BigInsert /><span>Вставить</span><Caret w={4} /></Big>
            <Big $w={39}><BigCreate /><span>Создать</span></Big>
          </Tools>
          <Foot aria-label="Компонент"><Caret /></Foot>
        </Panel>
        <Panel $w={119}>
          <Stack><Small><SmMove /><span>Свободное перемещение</span></Small><Small><SmRotate /><span>Свободный поворот</span></Small></Stack>
          <Foot aria-label="Положение"><Caret /></Foot>
        </Panel>
        <Panel $w={190} $pad={1}>
          <Tools>
            <Big $w={50}><BigJoint /><span>Соединение</span></Big>
            <Big $w={51}><BigConstraint /><span>Зависимость</span></Big>
            <Stack $inset={3}>
              <Small><SmRel tone="#d6dade" bulb={c.gold} /><span>Показать</span></Small>
              <Small $off><SmRel tone="#5d6673" bulb="#6d7683" /><span>Показать ошибки</span></Small>
              <Small><SmRel tone="#d6dade" bulb="#6fc4e8" /><span>Скрыть все</span></Small>
            </Stack>
          </Tools>
          <Foot aria-label="Взаимосвязи"><Caret /></Foot>
        </Panel>
        <Panel $w={110}>
          <Stack><Small><SmPattern /><span>Массив</span></Small><Small><SmMirror /><span>Зеркальное отражение</span></Small><Small><SmCopy /><span>Копировать</span></Small></Stack>
          <Foot aria-label="Массив"><Caret /></Foot>
        </Panel>
        <Panel $w={109} $pad={2}>
          <Tools>
            <Big $w={58}><BigBom /><span>Спецификация</span></Big>
            <Big $w={48}><FxBox><Fx $s={26}>fx</Fx></FxBox><span>Параметры</span></Big>
          </Tools>
          <Foot aria-label="Управление"><Caret /></Foot>
        </Panel>
        <Panel $w={181}>
          <Stack>
            <Small><SmIpart /><span>Создать параметрическую деталь/сборку</span></Small>
            <Small $off><SmTable off /><span>Редактировать с использованием таблицы</span></Small>
            <Small><SmTable /><span>Редактировать семейство</span><Caret w={4} /></Small>
          </Stack>
        </Panel>
        <Panel $w={64} $pad={2}>
          <Tools><Big $w={60}><BigSub /><span>Создать</span><span>подстановку</span><CornerCaret><Caret w={4} /></CornerCaret></Big></Tools>
        </Panel>
        <Panel $w={109} $pad={3}>
          <Tools>
            <Big $w={53}><BigPlane /><span>Плоскость</span><Caret w={4} /></Big>
            <Stack $inset={3}>
              <Small><SmAxis /><span>Ось</span><Caret w={4} /></Small>
              <Small><SmPoint /><span>Точка</span><Caret w={4} /></Small>
              <Small><SmUcs /><span>ПСК</span></Small>
            </Stack>
          </Tools>
        </Panel>
        <Panel $w={121} $pad={1}>
          <Tools>
            <Big $w={66}><BigShrink /><span>Внешний контур</span></Big>
            <Big $w={52}><BigShell /><span>Подстановка</span><span>оболочки</span></Big>
          </Tools>
          <Foot aria-label="Упрощение"><Caret /></Foot>
        </Panel>
        <Panel $w={48} $pad={0} $last>
          <Tools><Big $w={48}><BigMeasure /><span>Измерение</span></Big></Tools>
          <Foot aria-label="Измерение"><Caret /></Foot>
        </Panel>
      </Ribbon>
      <Body>
        <Side>
          <Dock $grow={323}>
            <DockTabs>
              <DockTab>Модель<button aria-label="Закрыть"><IconX /></button></DockTab>
              <IconButton aria-label="Добавить"><IconPlus s={7} color={c.dim} /></IconButton>
              <Spacer />
              <IconButton aria-label="Поиск"><Svg w={10} h={10}><circle cx="4.500" cy="4.500" r="3.700" stroke={c.dim} /><path d="M7 7l3 3" stroke={c.dim} strokeWidth="1.200" /></Svg></IconButton>
              <IconButton aria-label="Меню"><IconMenu /></IconButton>
            </DockTabs>
            <SubTabs $h={22}><SubTab $on $line>Сборка</SubTab><Bar /><SubTab>Моделирование</SubTab></SubTabs>
            <Tree>
              <Node $root><Bolt /><TreeAsm /><span>Дверь решетчатая.iam (Уровень д</span></Node>
              {nodes.map((n) => (
                <Node key={n.text}><Expand aria-label="Развернуть"><IconPlus s={6} color={c.light} /></Expand>{n.icon}<span>{n.text}</span></Node>
              ))}
            </Tree>
            <HScroll><Svg w={4} h={6}><path d="M3.500.5L1 3l2.500 2.500" stroke={c.dim} /></Svg><Thumb /><span /><Svg w={4} h={6}><path d="M.5.5L3 3 .5 5.500" stroke={c.dim} /></Svg></HScroll>
          </Dock>
          <Dock $grow={264}>
            <DockTabs>
              <DockTab>iLogic<button aria-label="Закрыть"><IconX /></button></DockTab>
              <IconButton aria-label="Добавить"><IconPlus s={7} color={c.dim} /></IconButton>
              <Spacer />
              <IconButton aria-label="Меню"><IconMenu /></IconButton>
            </DockTabs>
            <SubTabs $h={20}>
              <SubTab>Правила</SubTab><Bar /><SubTab $on>Формы</SubTab><Bar /><SubTab>Глобальные фор</SubTab>
              <Svg w={3} h={5}><path d="M3 0L0 2.500 3 5z" fill={c.off} /></Svg>
              <Svg w={6} h={6}><path d="M2 0l3.500 3L2 6z" fill="#fff" /></Svg>
            </SubTabs>
            <FormButton>Конфигурация</FormButton>
          </Dock>
        </Side>
        <Work>
          <Canvas>
            <Door />
            <DocControls>
              <IconButton aria-label="Свернуть"><IconMin /></IconButton>
              <IconButton aria-label="Расположить"><IconTile /></IconButton>
              <IconButton aria-label="Закрыть"><IconX color="#fff" /></IconButton>
            </DocControls>
            <ViewCube>Снизу</ViewCube>
            <NavBar>
              <End />
              <IconButton aria-label="Штурвал"><Svg w={15} h={15}><path d="M7.500 1H14V7.500A6.500 6.500 0 1 1 7.500 1z" {...navIcon} fill="#a9b6c5" /><circle cx="7.500" cy="7.500" r="3.500" stroke="#6a7b90" fill="#d3dbe4" /></Svg></IconButton>
              <Caret color="#5d6d82" w={4} />
              <NavRule />
              <IconButton aria-label="Панорамирование"><Svg w={15} h={15}><path d="M5.200 14L1 8.500l1-1 2.500 2L3 3l1.300-.3 1.700 4.500L6.200 1h1.300l.6 6L9.800 1.600l1.200.3-.8 5.600 2.600-3.400 1 .8L11.500 10l-1 4z" fill="#dde3ea" stroke="#6a7b90" strokeWidth=".5" /></Svg></IconButton>
              <IconButton aria-label="Масштаб"><Svg w={15} h={15}><path d="M1 1h6l3 3v8H1z" fill="#d3dbe4" /><circle cx="9.500" cy="9" r="3" fill="#a9b6c5" stroke="#65778e" /><path d="M11.500 11.500l3 3" stroke="#65778e" strokeWidth="1.600" /></Svg></IconButton>
              <Caret color="#5d6d82" w={4} />
              <IconButton aria-label="Орбита"><Svg w={15} h={15}><path d="M10 4.900C13 5.500 14.500 6.500 14 8c-1 2.500-13 2.500-13 0 0-1.500 2-2.500 5-2.800M4.900 10.500c.6 3 1.500 4 2.600 4 2.800 0 2.800-13.500 0-13.500-1.500 0-2.500 2-2.800 5" stroke="#56687f" strokeWidth="1.200" /><path d="M9.500 2.500l3 2.500-3 2zM5 9l-2 2.500h4z" fill="#56687f" /></Svg></IconButton>
              <Caret color="#5d6d82" w={4} />
              <IconButton aria-label="Вид на"><Svg w={15} h={15}><path d="M1 5h13v9H1zM2 4l6-3v3" stroke="#dde3ea" strokeWidth="1.200" fill="#a9b6c5" /><path d="M4 7.500h7.500v4H4z" fill="#dde3ea" stroke="#65778e" strokeWidth=".7" /></Svg></IconButton>
              <End />
            </NavBar>
            <Dialog onSubmit={(e) => e.preventDefault()}>
              <DialogHead><h2>Конфигурация</h2><button type="button" aria-label="Закрыть"><IconX /></button></DialogHead>
              <Rows>
                {fields.map((f) => (
                  <Row key={f.label}>
                    <span>{f.label}</span>
                    {f.select ? <SelectBox><select><option>{f.value}</option></select><Caret color={c.text} w={4} /></SelectBox> : <input defaultValue={f.value} />}
                  </Row>
                ))}
              </Rows>
              <Actions>{actions.map((a) => <Action key={a} type="button">{a}</Action>)}</Actions>
              <DialogFoot><Action $w={68}>Готово</Action></DialogFoot>
              <Grip><Svg w={7} h={7}><path d="M5 0h1.200v1.200H5zM2.500 2.500h1.200v1.200H2.500zM5 2.500h1.200v1.200H5zM0 5h1.200v1.200H0zM2.500 5h1.200v1.200H2.500zM5 5h1.200v1.200H5z" fill={c.dim} /></Svg></Grip>
            </Dialog>
          </Canvas>
          <DocTabs>
            <DocTab>Дверь решетчатая.iam<button aria-label="Закрыть"><IconX s={6} color={c.dim} /></button></DocTab>
            <IconButton aria-label="Список документов"><IconMenu /></IconButton>
          </DocTabs>
        </Work>
      </Body>
      <Status><span>Для вызова справки нажмите F1</span><output>72</output><output>29</output></Status>
    </Screen>
  );
}
